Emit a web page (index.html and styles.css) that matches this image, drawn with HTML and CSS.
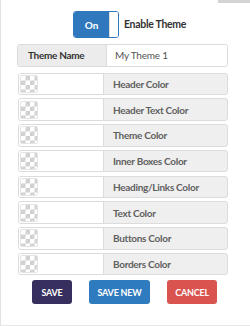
FILE: index.html
```html
<!DOCTYPE html>
<html>
<head>
<meta charset="utf-8">
<link rel="stylesheet" href="styles.css">
</head>
<body>
<div class="panel">
  <div class="topbar"></div>
  <div class="enable">
    <div class="toggle"><span class="on">On</span><span class="knob"></span></div>
    <span class="enable-label">Enable Theme</span>
  </div>
  <div class="row name-row">
    <div class="name-label">Theme Name</div>
    <div class="name-value">My Theme 1</div>
  </div>
  <div class="colors">
    <div class="row"><div class="swatch-cell"><span class="swatch"></span></div><div class="label">Header Color</div></div>
    <div class="row"><div class="swatch-cell"><span class="swatch"></span></div><div class="label">Header Text Color</div></div>
    <div class="row"><div class="swatch-cell"><span class="swatch"></span></div><div class="label">Theme Color</div></div>
    <div class="row"><div class="swatch-cell"><span class="swatch"></span></div><div class="label">Inner Boxes Color</div></div>
    <div class="row"><div class="swatch-cell"><span class="swatch"></span></div><div class="label">Heading/Links Color</div></div>
    <div class="row"><div class="swatch-cell"><span class="swatch"></span></div><div class="label">Text Color</div></div>
    <div class="row"><div class="swatch-cell"><span class="swatch"></span></div><div class="label">Buttons Color</div></div>
    <div class="row"><div class="swatch-cell"><span class="swatch"></span></div><div class="label">Borders Color</div></div>
  </div>
  <div class="buttons">
    <button class="btn save">SAVE</button>
    <button class="btn savenew">SAVE NEW</button>
    <button class="btn cancel">CANCEL</button>
  </div>
</div>
</body>
</html>
```
FILE: styles.css
```css
* { box-sizing: border-box; }
html, body { margin: 0; padding: 0; background: #fff; }
body { width: 250px; height: 326px; overflow: hidden; font-family: Lato, "Open Sans", sans-serif; }
.panel {
  position: relative;
  width: 250px;
  height: 326px;
  border-left: 1px solid #e2e2e2;
  border-bottom: 1px solid #e6e6e6;
  padding: 11px 0 0 16px;
}
.topbar {
  position: absolute;
  top: 0; right: 0;
  width: 32px; height: 3px;
  background: #d4d4d4;
}
.enable { display: flex; align-items: center; margin-left: 56px; height: 27px; }
.toggle {
  display: flex;
  width: 46px; height: 27px;
  border-radius: 3px;
  overflow: hidden;
  border: 1px solid #2f78bd;
}
.on {
  flex: 0 0 35px;
  background: #2f78bd;
  color: #fff;
  font-weight: 700;
  font-size: 10px;
  display: flex; align-items: center; justify-content: center;
}
.knob { flex: 1; background: #fff; border-left: 1px solid #ddd; }
.enable-label {
  margin-left: 5px;
  font-weight: 700;
  font-size: 10.5px;
  letter-spacing: -0.3px;
  color: #333;
  align-self: flex-start;
  margin-top: 7px;
}
.row {
  display: flex;
  width: 211px;
  height: 22.5px;
  border: 1px solid #dcdcdc;
  border-radius: 3px;
  overflow: hidden;
  background: #efefef;
}
.name-row { margin-top: 6px; width: 211px; }
.name-label {
  flex: 0 0 89px;
  background: #ececec;
  border-right: 1px solid #dcdcdc;
  font-weight: 700;
  font-size: 10px;
  letter-spacing: -0.3px;
  color: #333;
  display: flex; align-items: center;
  padding-left: 10px;
}
.name-value {
  flex: 1;
  background: #fff;
  font-size: 10px;
  letter-spacing: -0.2px;
  color: #555;
  display: flex; align-items: center;
  padding-left: 8px;
}
.colors { display: flex; flex-direction: column; gap: 3.25px; margin-top: 6px; margin-left: 1px; }
.colors .row { width: 210px; }
.swatch-cell {
  flex: 0 0 85px;
  background: #fff;
  border-right: 1px solid #dcdcdc;
  display: flex; align-items: center;
  padding-left: 1px;
}
.swatch {
  width: 18px; height: 18px;
  border-radius: 2px;
  background-color: #fff;
  background-image:
    linear-gradient(45deg, #cfcfcf 25%, transparent 25%, transparent 75%, #cfcfcf 75%),
    linear-gradient(45deg, #cfcfcf 25%, transparent 25%, transparent 75%, #cfcfcf 75%);
  background-size: 9px 9px;
  background-position: 0 0, 4.5px 4.5px;
  border: 1px solid #e4e4e4;
}
.label {
  flex: 1;
  font-weight: 700;
  font-size: 10px;
  letter-spacing: -0.3px;
  color: #5f5f5f;
  display: flex; align-items: center;
  padding-left: 9px;
}
.buttons { display: flex; gap: 17px; margin-top: 5px; margin-left: 15px; }
.btn {
  height: 24px;
  border: none;
  border-radius: 3px;
  color: #fff;
  font-family: Lato, sans-serif;
  font-weight: 700;
  font-size: 9px;
  letter-spacing: -0.2px;
  padding: 0;
}
.save { width: 40px; background: #372f5e; }
.savenew { width: 61px; background: #2f7bbf; }
.cancel { width: 50px; background: #d9534f; }
```
